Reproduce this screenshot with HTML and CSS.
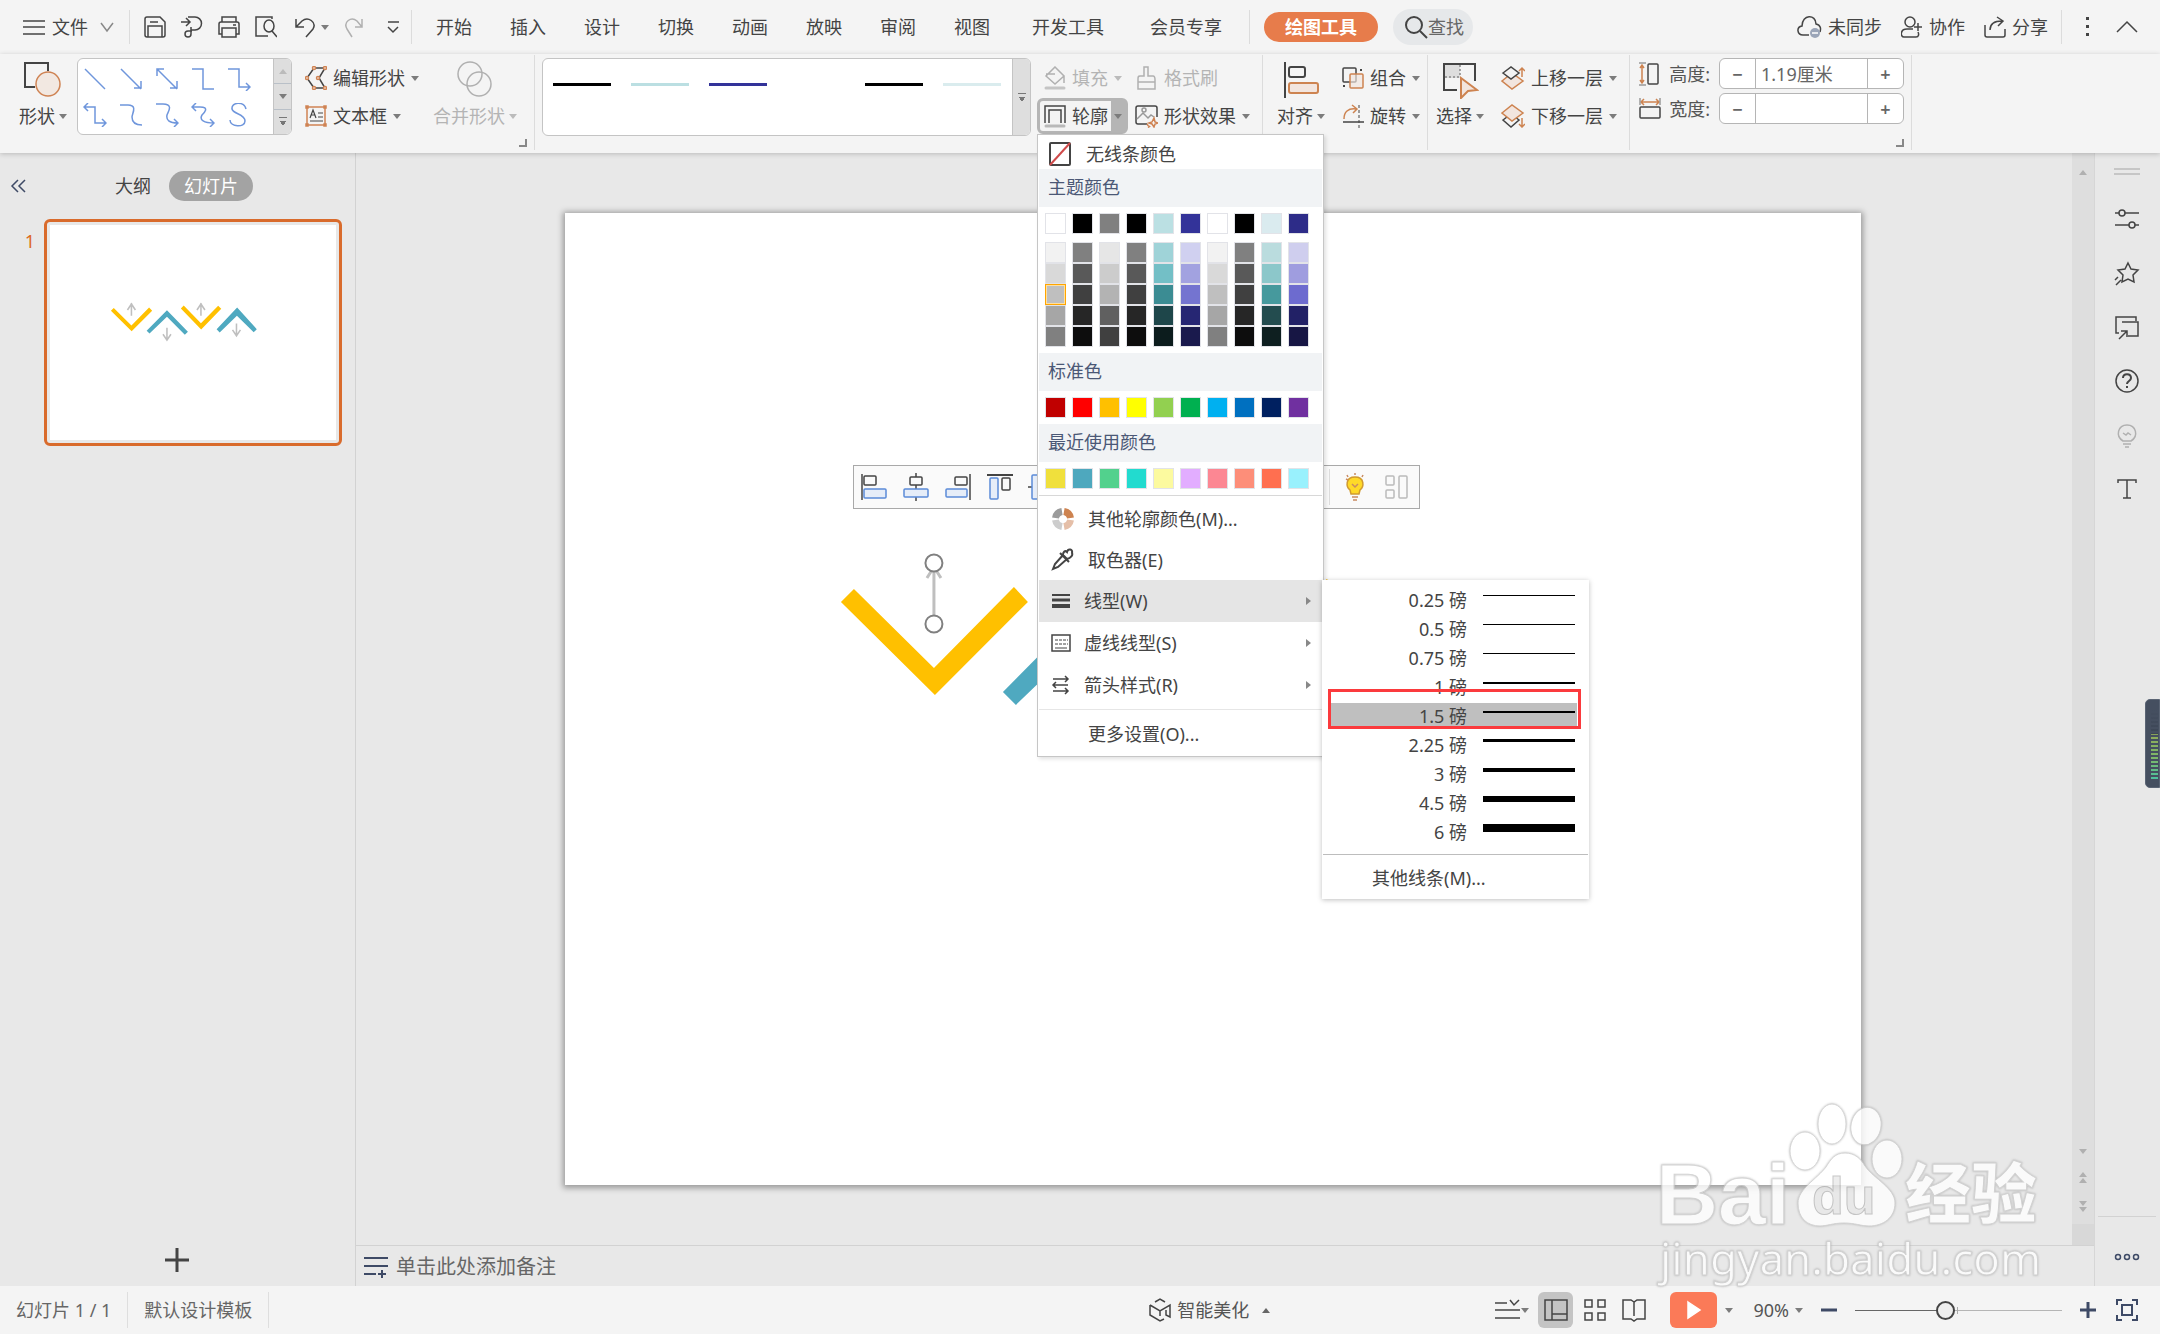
FILE: index.html
```html
<!DOCTYPE html>
<html lang="zh-CN">
<head>
  <meta charset="UTF-8" />
  <title>演示文稿</title>
  <meta name="viewport" content="width=device-width, initial-scale=1.0" />
  <link rel="stylesheet" href="styles.css">
</head>
<body>

  <!-- Slide drawing, shared by the thumbnail and the canvas -->
  <svg class="defs" width="0" height="0">
    <symbol id="slide-art" viewBox="0 0 1296 972">
      <path fill="#ffc000" d="M276 389l13-13 80 79 80-81 14 15-93 93zM593 378l13-13 78 80 78-79 14 14-91 94z"/>
      <path fill="#4fa9c0" d="M438 479l92-93 95 98-14 13-81-81-79 76zM755 472l93-98 89 98-14 14-76-75-78 76z"/>
    </symbol>
  </svg>

  <div class="app">

    <header class="titlebar">
      <button class="file-btn">
        <svg width="22" height="22" viewBox="0 0 22 22"><path d="M0 5h22M0 11h22M0 18h22"/></svg>
        <span>文件</span>
        <svg class="soft" width="14" height="14" viewBox="0 0 14 14"><path d="M1 3l6 8 6-8"/></svg>
      </button>
      <span class="divider"></span>
      <div class="quick">
        <button aria-label="保存"><svg width="22" height="22" viewBox="0 0 22 22"><path d="M3 1h13l5 5v13a2 2 0 0 1-2 2H3a2 2 0 0 1-2-2V3a2 2 0 0 1 2-2zM4 21V10h14v11M6 6h8"/></svg></button>
        <button aria-label="输出为PDF"><svg width="22" height="22" viewBox="0 0 22 22"><path d="M0 6h8M5 2l4 4-4 4M7 1h7a6 6 0 0 1 0 13h-4v-3M10 14v4a3 3 0 1 1-3-3h4"/></svg></button>
        <button aria-label="打印"><svg width="22" height="22" viewBox="0 0 22 22"><path d="M4 6V1h14v5M4 18H1V8a2 2 0 0 1 2-2h16a2 2 0 0 1 2 2v10h-3M4 12h14v9H4zM15 9h3"/></svg></button>
        <button aria-label="打印预览"><svg width="22" height="22" viewBox="0 0 22 22"><path d="M17 3V1H1v19h12M17 15l5 6"/><ellipse cx="14" cy="10" rx="5" ry="6"/></svg></button>
        <button class="undo" aria-label="撤销"><svg width="20" height="22" viewBox="0 0 20 22"><path d="M1 3v8h8M1 11l6-6c6-5 15 1 11 8l-7 8"/></svg><i class="caret"></i></button>
        <button class="off" aria-label="恢复"><svg width="20" height="22" viewBox="0 0 20 22"><path d="M18 3v8h-7M18 11l-5-6C7 0-1 6 3 13l5 8"/></svg></button>
        <button class="more" aria-label="自定义"><svg width="12" height="14" viewBox="0 0 12 14"><path d="M1 2h11M1 7l5 5 5-5"/></svg></button>
      </div>
      <span class="divider"></span>
      <nav class="tabs">
        <button>开始</button><button>插入</button><button>设计</button><button>切换</button><button>动画</button><button>放映</button><button>审阅</button><button>视图</button><button class="wide">开发工具</button><button class="wide">会员专享</button>
      </nav>
      <span class="divider"></span>
      <button class="tool-tab">绘图工具</button>
      <button class="find">
        <svg width="24" height="24" viewBox="0 0 24 24" stroke-width="2"><circle cx="10" cy="10" r="8"/><path d="M16 16l7 7"/></svg>查找
      </button>
      <div class="account">
        <button><svg width="25" height="24" viewBox="0 0 25 24"><path d="M12 20H6C0 20-1 12 5 11 5-1 19-1 19 9c5 1 5 5 4 8"/><circle cx="18" cy="18" r="5" fill="#9ba5b8" stroke="none"/><path stroke="#fff" d="M15 18h6"/></svg>未同步</button>
        <button><svg width="22" height="22" viewBox="0 0 22 22"><circle cx="9" cy="6" r="5"/><path d="M12 13H6c-7 0-7 8-3 8h12c3 0 3-3 2-5M17 7v8M13 11h8"/></svg>协作</button>
        <button><svg width="22" height="22" viewBox="0 0 22 22"><path d="M1 9v10a2 2 0 0 0 2 2h16a2 2 0 0 0 2-2v-6M6 14c0-6 4-9 12-9M13 1l6 4-5 5"/></svg>分享</button>
        <span class="divider"></span>
        <button class="dots" aria-label="更多"><svg width="4" height="22" viewBox="0 0 4 22"><path fill="#444" stroke="none" d="M0 1h3v3H0zM0 9h3v3H0zM0 17h3v3H0z"/></svg></button>
        <button aria-label="收起功能区"><svg width="22" height="14" viewBox="0 0 22 14"><path d="M1 12L11 2l10 10"/></svg></button>
      </div>
    </header>

    <section class="ribbon">
      <div class="group shapes-group">
        <button class="big">
          <svg width="38" height="38" viewBox="0 0 38 38"><path stroke-width="2" d="M11 26H1V2h23v8"/><circle cx="24" cy="23" r="12" fill="#f2e8e1" stroke="#cf8353"/></svg>
          <span>形状<i class="caret"></i></span>
        </button>
        <div class="gallery">
          <div class="shape-list">
            <button aria-label="直线"><svg viewBox="0 0 24 24"><path d="M2 2l20 20"/></svg></button>
            <button aria-label="箭头"><svg viewBox="0 0 24 24"><path d="M2 2l20 20M15 21h7v-7"/></svg></button>
            <button aria-label="双箭头"><svg viewBox="0 0 24 24"><path d="M2 2l20 20M15 21h7v-7M9 2H2v7"/></svg></button>
            <button aria-label="肘形"><svg viewBox="0 0 24 24"><path d="M1 2h11v20h11"/></svg></button>
            <button aria-label="肘形箭头"><svg viewBox="0 0 24 24"><path d="M1 2h11v18h11M19 16l4 4-4 4"/></svg></button>
            <button aria-label="肘形双箭头"><svg viewBox="0 0 24 24"><path d="M1 4h11v16h11M19 16l4 4-4 4M5 0L1 4l4 4"/></svg></button>
            <button aria-label="曲线"><svg viewBox="0 0 24 24"><path d="M1 2h8c10 0 4 9 4 12 0 5 3 8 10 8"/></svg></button>
            <button aria-label="曲线箭头"><svg viewBox="0 0 24 24"><path d="M1 1h7c11 0 5 8 4 11-1 5 2 8 11 8M19 16l4 4-4 4"/></svg></button>
            <button aria-label="曲线双箭头"><svg viewBox="0 0 24 24"><path d="M1 4h8c10 0 4 6 2 8-3 5 2 8 12 8M19 16l4 4-4 4M5 0L1 4l4 4"/></svg></button>
            <button aria-label="自由曲线"><svg viewBox="0 0 24 24"><path d="M19 6C17-2 4-1 5 6c1 5 13 5 13 12 0 7-15 6-15-1"/></svg></button>
          </div>
          <div class="gallery-scroll">
            <button aria-label="上一行"><i class="caret up pale"></i></button>
            <button aria-label="下一行"><i class="caret"></i></button>
            <button aria-label="展开"><i class="bar-caret"></i></button>
          </div>
        </div>
        <div class="stack">
          <button><svg width="22" height="24" viewBox="0 0 22 24"><path d="M20 2H9L2 12l7 10h11l-6-10z"/><g fill="#fff" stroke="#cf8353"><circle cx="20" cy="2" r="1.5"/><circle cx="9" cy="2" r="1.5"/><circle cx="2" cy="12" r="1.5"/><circle cx="9" cy="22" r="1.5"/><circle cx="20" cy="22" r="1.5"/><circle cx="13" cy="12" r="1.5"/></g></svg>编辑形状<i class="caret"></i></button>
          <button><svg width="22" height="22" viewBox="0 0 22 22"><path stroke="#cf8353" d="M2 2h18v18H2zM1 1h2v2H1zM19 1h2v2h-2zM1 19h2v2H1zM19 19h2v2h-2z"/><path d="M5 13l3-8 3 8M6 10h4M13 8h5M13 12h5M5 16h13" stroke-width="1.2"/></svg>文本框<i class="caret"></i></button>
        </div>
        <button class="big off merge">
          <svg width="36" height="38" viewBox="0 0 36 38"><circle cx="13" cy="13" r="12"/><circle cx="22" cy="23" r="12"/></svg>
          <span>合并形状<i class="caret"></i></span>
        </button>
        <i class="launcher"></i>
      </div>
      <span class="divider"></span>

      <div class="group style-group">
        <div class="gallery style-gallery">
          <div class="style-list" id="style-list"></div>
          <div class="gallery-scroll"><button aria-label="展开样式"><i class="bar-caret"></i></button></div>
        </div>
        <div class="paint">
          <button class="cell off"><svg width="22" height="24" viewBox="0 0 22 24"><path d="M11 1l9 9-9 8-9-8zM2 8h9M20 10v7"/><path stroke="#c4c4c4" stroke-width="3" stroke-linecap="round" d="M2 22h18"/></svg>填充<i class="caret"></i></button>
          <button class="off"><svg width="23" height="24" viewBox="0 0 23 24"><path d="M9 1h4v9h5c2 0 2 2 2 4v9H3V14c0-3 0-4 2-4h4zM3 16h17"/></svg>格式刷</button>
          <div class="outline">
            <button class="cell open"><svg width="22" height="24" viewBox="0 0 22 24"><path d="M1 19V2h20v17M5 19V6h12v13"/><path stroke="#b9b9b9" stroke-width="3" stroke-linecap="round" d="M2 22h18"/></svg>轮廓<i class="caret"></i></button>

            <!-- Outline drop-down -->
            <div class="menu">
              <button class="no-line"><svg width="22" height="24" viewBox="0 0 22 24"><rect x="1" y="1" width="20" height="22" rx="1" stroke-width="2"/><path stroke="#d04a4a" stroke-width="2" d="M1 23L21 1"/></svg>无线条颜色</button>
              <h3>主题颜色</h3>
              <div class="swatches" id="theme"></div>
              <div class="swatches tints" id="tints"></div>
              <h3>标准色</h3>
              <div class="swatches" id="standard"></div>
              <h3>最近使用颜色</h3>
              <div class="swatches" id="recent"></div>
              <hr>
              <button class="item plain"><svg width="24" height="24" viewBox="0 0 24 24" stroke-width="7"><path stroke="#9b9b9b" d="M4.500 11A8 8 0 0 1 11 4.500"/><path stroke="#cd8350" d="M13 4.500A8 8 0 0 1 19.500 11"/><path stroke="#e5bfa8" d="M19.500 13A8 8 0 0 1 13 19.500"/><path stroke="#cdcdcd" d="M11 19.500A8 8 0 0 1 4.500 13"/></svg>其他轮廓颜色(M)...</button>
              <button class="item plain"><svg width="24" height="24" viewBox="0 0 24 24"><path stroke-width="2" d="M2 21l2-5 8-9 4 4-9 8zM9 5l9 9M12 7c0-3 2-5 4-3 1-4 6-3 5 1 1 2-1 5-5 6"/></svg>取色器(E)</button>
              <div class="sub-wrap">
                <button class="item hover"><svg width="20" height="20" viewBox="0 0 20 20"><path d="M1 4h18" stroke-width="2"/><path d="M1 9h18" stroke-width="3"/><path d="M1 15h18" stroke-width="4"/></svg>线型(W)<i class="caret right"></i></button>
                <div class="submenu">
                  <ul id="weights"></ul>
                  <hr>
                  <button class="more-lines">其他线条(M)...</button>
                </div>
              </div>
              <button class="item"><svg width="20" height="20" viewBox="0 0 20 20"><path d="M1 2h18v16H1z"/><path stroke-width="1" d="M4 15h12"/><path stroke-width="1" stroke-dasharray="3 1" d="M4 7h13M4 11h13"/></svg>虚线线型(S)<i class="caret right"></i></button>
              <button class="item"><svg width="20" height="20" viewBox="0 0 20 20"><path d="M2 4h15M14 1l3 3-3 3M17 10H2M5 7l-3 3 3 3M2 16h15M14 13l3 3-3 3"/></svg>箭头样式(R)<i class="caret right"></i></button>
              <hr class="light">
              <button class="item last">更多设置(O)...</button>
            </div>
          </div>
          <button><svg width="23" height="24" viewBox="0 0 23 24"><path d="M12 20H3a2 2 0 0 1-2-2V4a2 2 0 0 1 2-2h17a2 2 0 0 1 2 2v9"/><path stroke="#999" d="M2 15l6-6 5 5 3-3 3 2"/><circle cx="9" cy="6" r="2" stroke="#999"/><path stroke="#cf8353" d="M19 14l1 4 3 1-3 1-1 3-2-3-3-1 3-1zM12 20l1 1.500 1.500 1-1.500 1"/></svg>形状效果<i class="caret"></i></button>
        </div>
      </div>
      <span class="divider"></span>

      <div class="group align-group">
        <button class="big">
          <svg width="38" height="38" viewBox="0 0 38 38" stroke-width="2"><path d="M3 1v36"/><rect x="7" y="6" width="16" height="10" rx="2"/><rect x="7" y="22" width="29" height="10" rx="2" fill="#f2e5de" stroke="#cd8350"/></svg>
          <span>对齐<i class="caret"></i></span>
        </button>
        <div class="stack">
          <button><svg width="22" height="24" viewBox="0 0 22 24"><rect x="1" y="2" width="13" height="14" rx="1"/><rect x="8" y="8" width="13" height="14" rx="1" fill="#f2e5deaa" stroke="#cd8350"/><path d="M2 19v2M19 3v2" stroke-width="2"/></svg>组合<i class="caret"></i></button>
          <button><svg width="22" height="24" viewBox="0 0 22 24"><path stroke="#cd8350" d="M2 15C2 8 6 4 14 5M10 1l5 4-4 4"/><path stroke-dasharray="3 2" stroke-width="1" d="M17 1v23"/><path d="M1 18h21"/></svg>旋转<i class="caret"></i></button>
        </div>
      </div>
      <span class="divider"></span>

      <div class="group select-group">
        <button class="big">
          <svg width="38" height="38" viewBox="0 0 38 38"><path fill="#ddd" stroke="none" d="M4 4h15v13H4z"/><path stroke-width="2" d="M34 20V3H3v26h13"/><path stroke="#888" stroke-dasharray="2 2" d="M19 4v12M4 16h15"/><path fill="#f2e5de" stroke="#cd8350" stroke-width="2" d="M20 17l16 12-9 1-7 7z"/></svg>
          <span>选择<i class="caret"></i></span>
        </button>
        <div class="stack">
          <button><svg width="24" height="24" viewBox="0 0 24 24"><path fill="#f2e5de" stroke="#cd8350" d="M1 15l10-8 11 8-11 8z"/><path fill="#f3f3f3" d="M2 7l8-6 8 6-8 6z"/><path stroke="#cd8350" d="M21 11V2M18 5l3-3 3 3"/></svg>上移一层<i class="caret"></i></button>
          <button><svg width="24" height="24" viewBox="0 0 24 24"><path d="M2 16l8-6 8 6-8 7z"/><path fill="#f2e5de" stroke="#cd8350" d="M1 9l10-8 11 8-11 8z"/><path stroke="#cd8350" d="M21 14v9M18 20l3 3 3-3"/></svg>下移一层<i class="caret"></i></button>
        </div>
      </div>
      <span class="divider"></span>

      <div class="group size-group">
        <div class="size-row">
          <svg width="20" height="24" viewBox="0 0 20 24"><rect x="9" y="2" width="10" height="20" rx="1"/><path stroke="#cd8350" d="M3 3v18M1 6l2-3 2 3M1 18l2 3 2-3"/><path stroke="#999" d="M0 1h7M0 23h7"/></svg>
          <label for="height">高度:</label>
          <div class="spinner"><button aria-label="减小高度">−</button><input id="height" type="text" value="1.19厘米"><button aria-label="增大高度">+</button></div>
        </div>
        <div class="size-row">
          <svg width="22" height="24" viewBox="0 0 22 24"><rect x="1" y="10" width="20" height="11" rx="1"/><path stroke="#cd8350" d="M2 5h18M5 2L2 5l3 3M17 2l3 3-3 3"/><path stroke="#999" d="M1 1v7M21 1v7"/></svg>
          <label for="width">宽度:</label>
          <div class="spinner"><button aria-label="减小宽度">−</button><input id="width" type="text" value=""><button aria-label="增大宽度">+</button></div>
        </div>
        <i class="launcher"></i>
      </div>
      <span class="divider"></span>
    </section>

    <main class="workspace">
      <aside class="outline-pane">
        <div class="pane-head">
          <button class="collapse" aria-label="收起"><svg width="16" height="16" viewBox="0 0 16 16" stroke="#3e4a66"><path d="M8 2L2 8l6 6M15 2L9 8l6 6"/></svg></button>
          <button class="pane-tab">大纲</button>
          <button class="pane-tab active">幻灯片</button>
        </div>
        <div class="thumb-row">
          <span class="thumb-num">1</span>
          <button class="thumb" aria-label="幻灯片 1">
            <svg viewBox="0 0 1296 972" stroke="none">
              <use href="#slide-art"/>
              <path stroke="#bfbfbf" stroke-width="7" d="M369 411V354M351 385l18-27 18 27M684 411V354M666 385l18-27 18 27M530 466v57M512 495l18 27 18-27M845 446v57M827 475l18 27 18-27"/>
            </svg>
          </button>
        </div>
        <button class="add-slide" aria-label="新建幻灯片"><svg width="26" height="26" viewBox="0 0 26 26" stroke-width="3"><path d="M13 1v24M1 13h24"/></svg></button>
      </aside>

      <section class="editor">
        <div class="stage-row">
          <div class="stage">
            <div class="slide">
              <svg class="slide-svg" viewBox="0 0 1296 972" stroke="none">
                <use href="#slide-art"/>
                <path stroke="#bfbfbf" stroke-width="3" d="M369 411V352M362 365l7-11 7 11M684 411V352M530 466v57M845 446v57"/>
                <g fill="#fff" stroke="#808080" stroke-width="2"><circle cx="369" cy="350" r="8.500"/><circle cx="369" cy="411" r="8.500"/></g>
              </svg>
              <div class="float-bar">
                <button aria-label="左对齐"><svg viewBox="0 0 28 28"><path d="M2 1v26"/><rect x="4" y="3" width="12" height="9" rx="1"/><rect class="blue" x="4" y="16" width="22" height="9" rx="1"/></svg></button>
                <button aria-label="水平居中"><svg viewBox="0 0 28 28"><path d="M14 0v28"/><rect x="8" y="4" width="12" height="8" rx="1" fill="#fafafa"/><rect class="blue" x="2" y="16" width="24" height="8" rx="1"/></svg></button>
                <button aria-label="右对齐"><svg viewBox="0 0 28 28"><path d="M26 1v26"/><rect x="11" y="4" width="12" height="8" rx="1"/><rect class="blue" x="2" y="16" width="21" height="8" rx="1"/></svg></button>
                <button aria-label="靠上对齐"><svg viewBox="0 0 28 28"><path d="M1 2h26" stroke-width="2"/><rect class="blue" x="4" y="5" width="8" height="21" rx="1"/><rect x="16" y="5" width="8" height="12" rx="1"/></svg></button>
                <button aria-label="垂直居中"><svg viewBox="0 0 28 28"><path d="M0 14h28"/><rect class="blue" x="4" y="2" width="8" height="24" rx="1"/></svg></button>
                <span class="push"></span>
                <button aria-label="智能"><svg viewBox="0 0 28 28"><path fill="#ffd928" stroke="#d09a30" d="M14 4c-10 0-9 10-5 13l1 4h8l1-4c4-3 5-13-5-13z"/><path stroke="#c98b62" d="M11 24h6M12 27h4M14 0v2M6 2l1 2M22 2l-1 2M5 6l2 1M11 11l3 3 3-3"/></svg></button>
                <button aria-label="布局"><svg viewBox="0 0 28 28" stroke="#bbb"><rect x="3" y="3" width="8" height="9" rx="1"/><rect x="3" y="17" width="8" height="8" rx="1"/><rect x="16" y="3" width="8" height="22" rx="1"/></svg></button>
              </div>
            </div>
          </div>
          <div class="scrollbar">
            <i class="caret up"></i>
            <div class="pager"><i class="caret"></i><span><i class="caret up"></i><i class="caret up"></i></span><span><i class="caret"></i><i class="caret"></i></span></div>
            <div class="scroll-foot"></div>
          </div>
        </div>
        <div class="notes">
          <svg width="24" height="22" viewBox="0 0 24 22" stroke="#3e4a66" stroke-width="2"><path d="M0 2h24M0 10h24M0 18h12M14 18h8M18 14v8"/></svg>
          单击此处添加备注
        </div>
      </section>

      <aside class="side-tools">
        <svg class="grip" width="26" height="8" viewBox="0 0 26 8"><path stroke="#bbb" d="M0 1h26M0 6h26"/></svg>
        <button aria-label="属性"><svg viewBox="0 0 26 26"><path d="M1 7h4M11 7h14M1 19h14M21 19h4"/><circle cx="8" cy="7" r="3"/><circle cx="18" cy="19" r="3"/></svg></button>
        <button aria-label="动画"><svg viewBox="0 0 26 26"><path d="M14 3l3 6 7 1-5 5 1 7-6-3-6 3 1-7-5-5 7-1zM2 25l5-5M1 20l3-3"/></svg></button>
        <button aria-label="素材"><svg viewBox="0 0 26 26"><path d="M5 19H2V3h20v4M8 8h16v14H14M5 25l8-8M13 23v-6H7"/></svg></button>
        <button aria-label="帮助"><svg viewBox="0 0 26 26"><circle cx="13" cy="13" r="11"/><path d="M9 10c0-5 8-5 8 0 0 3-4 3-4 6M13 18v2" stroke-width="2"/></svg></button>
        <button aria-label="提示" class="off"><svg viewBox="0 0 26 26"><path d="M9 19c-8-5-5-16 4-16s12 11 4 16zM9 22h8M11 25h4M9 11l3 2 2-2 3 2"/></svg></button>
        <button aria-label="文字"><svg viewBox="0 0 26 26"><path d="M4 7V4h18v3M13 4v18M9 22h8"/></svg></button>
        <div class="side-more"><button aria-label="更多工具"><svg viewBox="0 0 26 26" stroke="#3e4a66"><circle cx="4" cy="13" r="2.500"/><circle cx="13" cy="13" r="2.500"/><circle cx="22" cy="13" r="2.500"/></svg></button></div>
        <div class="meter"></div>
      </aside>
    </main>

    <footer class="status">
      <span class="status-cell">幻灯片 1 / 1</span>
      <span class="status-cell">默认设计模板</span>
      <button class="beautify"><svg width="22" height="24" viewBox="0 0 22 24"><path d="M6 4l5-3 5 3M1 7v10l10 6 4-2M1 7l10 6 10-6v12l-4-2v-5M11 13v5"/></svg>智能美化<i class="caret up"></i></button>
      <div class="views">
        <button class="note-view" aria-label="备注"><svg width="26" height="24" viewBox="0 0 26 24"><path d="M0 5h12M15 2l4 5 5-5M0 12h25M0 20h25"/></svg><i class="caret"></i></button>
        <button class="view active" aria-label="普通视图"><svg width="24" height="24" viewBox="0 0 24 24"><path d="M1 2h22v20H1zM8 2v20M8 16h15"/></svg></button>
        <button class="view" aria-label="浏览视图"><svg width="24" height="24" viewBox="0 0 24 24"><path d="M2 2h7v7H2zM15 2h7v7h-7zM2 15h7v7H2zM15 15h7v7h-7z"/></svg></button>
        <button class="view" aria-label="阅读视图"><svg width="24" height="24" viewBox="0 0 24 24"><path d="M12 4L9 2H1v19h8l3 2 3-2h8V2h-8zM12 4v14"/></svg></button>
        <button class="play" aria-label="放映"><svg width="16" height="20" viewBox="0 0 16 20"><path fill="#fff" stroke="#fff" d="M2 2l12 8-12 8z"/></svg></button>
        <i class="caret"></i>
        <button class="zoom-val">90%<i class="caret"></i></button>
        <button class="zoom-step" aria-label="缩小"><svg width="16" height="16" viewBox="0 0 16 16" stroke="#3e4a66" stroke-width="3"><path d="M0 8h16"/></svg></button>
        <input class="zoom" type="range" min="0" max="100" value="43" aria-label="缩放">
        <button class="zoom-step" aria-label="放大"><svg width="16" height="16" viewBox="0 0 16 16" stroke="#3e4a66" stroke-width="3"><path d="M0 8h16M8 0v16"/></svg></button>
        <button class="fit" aria-label="适应窗口"><svg width="22" height="22" viewBox="0 0 22 22" stroke="#3e4a66" stroke-width="2"><path d="M1 6V1h5M16 1h5v5M21 16v5h-5M6 21H1v-5M6 6h10v10H6z"/></svg></button>
      </div>
    </footer>

    <svg class="watermark" width="420" height="206" viewBox="1640 1094 420 206" stroke="none">
      <text class="wm-bai" x="1656" y="1224">Bai</text>
      <g class="wm-paw">
        <ellipse cx="1805" cy="1151" rx="15" ry="19"/>
        <ellipse cx="1832" cy="1124" rx="14" ry="20"/>
        <ellipse cx="1866" cy="1126" rx="15" ry="19" transform="rotate(12 1866 1126)"/>
        <ellipse cx="1887" cy="1159" rx="15" ry="19"/>
        <path d="M1845 1153c10 0 16 6 20 13 9 13 30 22 30 37 0 15-12 23-26 23-8 0-14-3-25-3s-17 3-24 3c-13 0-22-8-22-23 0-14 19-24 28-36 5-8 9-14 19-14z"/>
      </g>
      <text class="wm-du" x="1812" y="1214">du</text>
      <text class="wm-cn" x="1905" y="1218">经验</text>
      <text class="wm-url" x="1660" y="1275">jingyan.baidu.com</text>
    </svg>
  </div>

  <script src="script.js"></script>
</body>
</html>
```

FILE: styles.css
```css
*, *::after {
  box-sizing: border-box;
}

html, body {
  margin: 0;
  height: 100%;
  overflow: hidden;
}

body, button, input {
  font-family: "Noto Sans", "Noto Sans CJK SC", sans-serif;
  font-size: 18px;
  font-weight: 400;
  line-height: 26px;
  color: #444;
}

button {
  display: flex;
  align-items: center;
  padding: 0;
  border: 0;
  background: none;
  white-space: nowrap;
  cursor: pointer;
}

svg {
  display: block;
  flex: none;
  fill: none;
}

svg:not([stroke]) {
  stroke: #444;
}

svg:not([stroke-width]) {
  stroke-width: 1.5;
}

.defs {
  position: absolute;
}

.app {
  position: relative;
  display: flex;
  flex-direction: column;
  height: 100%;
  background: #e8e8e8;
}

.divider {
  flex: none;
  width: 1px;
  background: #dcdcdc;
}

/* small triangles */
.caret {
  flex: none;
  width: 8px;
  border: 4px solid transparent;
  border-top: 5px solid #7c7c7c;
  border-bottom: 0;
}

.caret.up {
  border-top: 0;
  border-bottom: 5px solid #666;
}

.caret.pale {
  border-bottom-color: #bbb;
}

.caret.right {
  width: 5px;
  margin-left: auto;
  border: 4px solid transparent;
  border-left: 5px solid #888;
  border-right: 0;
}

.bar-caret {
  width: 8px;
  height: 9px;
  border-top: 1px solid #777;
  background: conic-gradient(from 326deg at 50% 100%, #777 68deg, transparent 0) bottom / 8px 5px no-repeat;
  transform: rotate(0deg);
}

.off, .off span {
  color: #b4b4b4;
}

.off svg {
  stroke: #b0b0b0;
}

.off .caret {
  border-top-color: #bbb;
}

/* title bar */
.titlebar {
  display: flex;
  align-items: center;
  height: 54px;
  padding-left: 23px;
  background: #f4f4f4;
}

.titlebar .divider {
  height: 34px;
}

.file-btn {
  gap: 7px;
  margin-right: 15px;
}

.file-btn .soft {
  margin-left: 5px;
  stroke: #888;
}

.quick {
  display: flex;
  align-items: center;
  gap: 15px;
  padding: 0 12px 0 14px;
}

.undo {
  gap: 6px;
  margin-left: 3px;
}

.more {
  margin-left: 8px;
}

.tabs {
  display: flex;
  padding: 0 4px 0 5px;
}

.tabs button {
  padding: 0 19px;
}

.tabs .wide {
  padding: 0 23px;
}

.tool-tab {
  height: 30px;
  margin: 0 15px 0 14px;
  padding: 0 21px;
  border-radius: 15px;
  background: #e77c4b;
  color: #fff;
  font-weight: 700;
}

.find {
  height: 36px;
  padding: 0 9px 0 11px;
  border-radius: 18px;
  background: #e6e8ea;
  color: #666;
}

.account {
  display: flex;
  align-items: center;
  gap: 19px;
  margin-left: auto;
  padding-right: 22px;
}

.account button {
  gap: 6px;
}

.account .divider {
  margin-left: -6px;
}

.account .dots {
  margin: 0 7px 0 5px;
}

/* ribbon */
.ribbon {
  position: relative;
  z-index: 5;
  display: flex;
  height: 99px;
  padding-left: 19px;
  background: #f4f4f4;
  box-shadow: 0 1px 5px rgba(0, 0, 0, 0.2);
}

.ribbon > .divider {
  height: 95px;
  margin-top: 1px;
}

.group {
  position: relative;
  display: flex;
  padding-top: 4px;
}

.big {
  flex-direction: column;
  align-self: flex-start;
  padding-top: 3px;
  gap: 4px;
}

.big span {
  display: flex;
  align-items: center;
  gap: 4px;
}

.stack {
  display: flex;
  flex-direction: column;
  gap: 2px;
  padding-top: 2px;
}

.stack button, .paint button {
  gap: 6px;
  height: 36px;
}

.gallery {
  display: flex;
  height: 77px;
  border: 1px solid #c4c4c4;
  border-radius: 6px;
  background: #fff;
  overflow: hidden;
}

.gallery-scroll {
  display: flex;
  flex-direction: column;
  width: 18px;
  border-left: 1px solid #c4c4c4;
  background: #dedede;
}

.gallery-scroll button {
  flex: 1;
  justify-content: center;
}

.gallery-scroll button + button {
  border-top: 1px solid #b9c0c8;
}

.launcher {
  position: absolute;
  right: 7px;
  bottom: 6px;
  width: 8px;
  height: 8px;
  border: solid #888;
  border-width: 0 2px 2px 0;
}

.shapes-group {
  padding-right: 17px;
}

.shapes-group .gallery {
  width: 215px;
  margin: 0 13px 0 10px;
}

.shape-list {
  flex: 1;
  display: grid;
  grid-template-columns: repeat(5, 36px);
  align-content: center;
  gap: 12px 0;
  padding-left: 5px;
}

.shape-list svg {
  width: 24px;
  height: 24px;
  stroke: #6f96dc;
}

.merge {
  margin-left: 14px;
}

.style-group {
  padding: 4px 12px 0 7px;
}

.style-gallery {
  width: 489px;
  height: 78px;
  margin-right: 6px;
}

.style-list {
  flex: 1;
  display: flex;
  gap: 20px;
  padding: 24px 10px;
}

.paint .swatches button, .style-list button {
  flex: none;
}

.style-list button {
  width: 58px;
  height: 3px;
}

.paint {
  display: grid;
  grid-template-columns: 91px auto;
  gap: 2px 7px;
  align-content: start;
  padding-top: 2px;
}

.cell {
  width: 91px;
  padding: 0 6px 0 7px;
}

.outline {
  position: relative;
}

.cell.open {
  padding: 0 3px 0 4px;
  border: 3px solid #b5b5b5;
  border-radius: 6px;
  background: linear-gradient(to right, #f4f4f4 71px, #b5b5b5 71px);
}

.align-group {
  padding: 4px 7px 0 14px;
}

.align-group .stack, .select-group .stack {
  margin-left: 17px;
}

.select-group {
  padding: 4px 12px 0 8px;
}

.size-group {
  flex-direction: column;
  gap: 4px;
  padding: 4px 7px 0 9px;
}

.size-row {
  display: flex;
  align-items: center;
  justify-content: space-between;
  width: 265px;
}

.size-row label {
  margin-left: auto;
  margin-right: 9px;
  color: #555;
}

.spinner {
  display: flex;
  width: 185px;
  height: 31px;
  border: 1px solid #b5b5b5;
  border-radius: 6px;
  background: #fff;
}

.spinner button {
  width: 35px;
  justify-content: center;
  font-weight: 600;
  color: #666;
}

.spinner input {
  flex: 1;
  min-width: 0;
  padding: 0 5px;
  border: solid #b5b5b5;
  border-width: 0 1px;
  background: none;
  color: #666;
}

/* outline drop-down */
.menu {
  position: absolute;
  top: 36px;
  left: 0;
  width: 287px;
  padding: 1px;
  border: 1px solid #c6c6c6;
  background: #fff;
  box-shadow: 2px 2px 4px rgba(0, 0, 0, 0.12);
}

.menu .no-line {
  width: 100%;
  height: 33px;
  gap: 15px;
  padding: 2px 0 0 10px;
}

.menu h3 {
  margin: 0;
  padding: 5px 9px 7px;
  background: #f1f3f5;
  color: #4b5876;
  font-size: 18px;
  font-weight: 400;
}

.swatches {
  display: grid;
  grid-template-columns: repeat(10, 21px);
  column-gap: 6px;
  padding: 6px;
}

.swatches.tints {
  padding-top: 2px;
}

.paint .swatches button {
  width: 21px;
  height: 21px;
  border: 1px solid #e2e3e8;
}

.paint .swatches .picked {
  border-color: #ffa500;
  box-shadow: inset 0 0 0 1px #ffe0a0;
}

.menu hr {
  height: 1px;
  margin: 0 0 2px;
  border: 0;
  background: #d8d8d8;
}

.menu hr.light {
  margin-top: 3px;
  background: #e6e6e6;
}

.paint .item {
  width: 100%;
  height: 42px;
  gap: 13px;
  padding: 0 11px 0 12px;
}

.paint .item.plain {
  height: 41px;
}

.paint .item.last {
  height: 43px;
  padding-left: 49px;
}

.item.hover {
  background: #e5e5e5;
}

.sub-wrap {
  position: relative;
}

.submenu {
  position: absolute;
  top: 0;
  left: 100%;
  width: 267px;
  padding: 6px 1px 0;
  background: #fff;
  box-shadow: 0 1px 5px rgba(0, 0, 0, 0.25);
}

.submenu ul {
  margin: 0;
  padding: 0 11px 7px 8px;
  list-style: none;
}

.submenu li {
  position: relative;
  padding: 1px 0 5px;
}

.paint .submenu li button {
  justify-content: flex-end;
  align-items: flex-start;
  gap: 16px;
  width: 100%;
  height: 23px;
  padding-right: 2px;
}

.submenu li.current button {
  background: #bfbfbf;
}

/* red frame round the current weight */
.submenu li.current::after {
  content: "";
  position: absolute;
  top: -13px;
  left: -3px;
  right: -4px;
  height: 40px;
  border: 3px solid #fb3a3d;
}

.weight {
  display: flex;
  align-items: center;
  width: 92px;
  height: 17px;
}

.weight i {
  width: 100%;
  background: #000;
}

.submenu hr {
  background: #bdbdbd;
}

.paint .more-lines {
  width: 100%;
  height: 42px;
  padding-left: 49px;
}

/* workspace */
.workspace {
  flex: 1;
  display: flex;
  min-height: 0;
}

.outline-pane {
  display: flex;
  flex-direction: column;
  width: 356px;
  padding: 18px 13px 13px 10px;
  border-right: 1px solid #d2d2d2;
}

.pane-head {
  display: flex;
  align-items: center;
  height: 30px;
}

.collapse {
  margin-right: 89px;
}

.pane-tab.active {
  height: 30px;
  margin-left: 18px;
  padding: 0 15px;
  border-radius: 15px;
  background: #a3a3a3;
  color: #fff;
}

.thumb-row {
  display: flex;
  margin-top: 18px;
}

.thumb-num {
  width: 34px;
  padding: 9px 9px 0 0;
  text-align: right;
  color: #dd6a1f;
}

.thumb {
  flex: 1;
  padding: 3px;
  border: 3px solid #d96b2c;
  border-radius: 6px;
}

.thumb svg {
  width: 100%;
  background: #fff;
}

.add-slide {
  align-self: flex-start;
  margin: auto 0 0 154px;
}

.editor {
  flex: 1;
  display: flex;
  flex-direction: column;
  min-width: 0;
}

.stage-row {
  flex: 1;
  display: flex;
  min-height: 0;
}

.stage {
  flex: 1;
  display: flex;
  align-items: center;
  justify-content: center;
  padding-right: 2px;
}

.slide {
  position: relative;
  width: 75.6%;
  aspect-ratio: 4 / 3;
  background: #fff;
  box-shadow: 0 1px 6px 2px rgba(0, 0, 0, 0.35);
}

.slide-svg {
  width: 100%;
}

.float-bar {
  position: absolute;
  top: 252px;
  left: 288px;
  display: flex;
  align-items: center;
  gap: 14px;
  width: 567px;
  height: 44px;
  padding: 0 8px 0 6px;
  border: 1px solid #a9a9a9;
  background: #fafafa;
}

.float-bar svg {
  width: 28px;
  height: 28px;
}

.float-bar .blue {
  fill: #e6edf8;
  stroke: #5b8bd8;
}

.push {
  height: 36px;
  margin-left: auto;
  border-left: 1px solid #ddd;
}

.push + button {
  margin-left: -3px;
}

.scrollbar {
  display: flex;
  flex-direction: column;
  align-items: center;
  justify-content: space-between;
  width: 22px;
  padding-top: 17px;
  background: #dedede;
}

.scrollbar .caret {
  border-top-color: #b0b0b0;
  border-bottom-color: #b0b0b0;
}

.scrollbar .caret:not(.up) {
  border-bottom-color: transparent;
}

.scrollbar .caret.up {
  border-top-color: transparent;
}

.pager {
  display: flex;
  flex-direction: column;
  align-items: center;
  gap: 18px;
  margin-top: auto;
  padding-bottom: 12px;
}

.pager span {
  display: flex;
  flex-direction: column;
  gap: 1px;
}

.scroll-foot {
  width: 100%;
  height: 21px;
  background: #d8d8d8;
}

.notes {
  display: flex;
  align-items: center;
  gap: 8px;
  height: 41px;
  padding: 2px 0 0 8px;
  border-top: 1px solid #d2d2d2;
  font-size: 20px;
  color: #666;
}

.side-tools {
  position: relative;
  display: flex;
  flex-direction: column;
  align-items: center;
  gap: 28px;
  width: 66px;
  padding: 15px 2px 0 0;
  border-left: 1px solid #d6d6d6;
}

.side-tools button svg {
  width: 26px;
  height: 26px;
}

.grip {
  margin-bottom: 2px;
}

.side-more {
  width: 58px;
  margin-top: auto;
  padding: 27px 16px 16px;
  border-top: 1px solid #d2d2d2;
}

.meter {
  position: absolute;
  top: 546px;
  right: 0;
  width: 15px;
  height: 89px;
  border: 1px solid #5a6474;
  border-radius: 5px 0 0 5px;
  background:
    repeating-linear-gradient(transparent 0 2px, #454f60 2px 4px) 5px 9px / 7px 71px no-repeat,
    linear-gradient(#454f60, #3c4656 35%, #8faa5a 36%, #7bb86a 70%, #4cc0a0) 5px 9px / 7px 71px no-repeat,
    #454f60;
}

/* status bar */
.status {
  position: relative;
  display: flex;
  align-items: center;
  justify-content: space-between;
  height: 48px;
  padding-right: 22px;
  background: #f4f4f4;
  color: #666;
}

.status button {
  color: #555;
}

.status-cell {
  padding: 5px 16px;
  border-right: 1px solid #dedede;
}

.beautify {
  gap: 6px;
  margin: 0 auto 0 880px;
}

.beautify .caret {
  margin-left: 7px;
}

.views {
  display: flex;
  align-items: center;
}

.note-view {
  margin-right: 9px;
}

.view {
  justify-content: center;
  width: 35px;
  height: 36px;
  margin-right: 4px;
  border-radius: 6px;
}

.view.active {
  background: #c4c4c4;
}

.play {
  justify-content: center;
  width: 47px;
  height: 36px;
  margin: 0 8px 0 15px;
  border-radius: 6px;
  background: #fb7a58;
}

.zoom-val {
  gap: 6px;
  margin: 0 18px 0 20px;
}

.zoom {
  appearance: none;
  width: 207px;
  height: 20px;
  margin: 0 18px;
  background:
    linear-gradient(#aaa, #aaa) 102px center / 1px 7px no-repeat,
    linear-gradient(to right, #666 90px, #b5b5b5 90px) center / 100% 1px no-repeat;
}

.zoom::-webkit-slider-thumb {
  appearance: none;
  width: 19px;
  height: 19px;
  border: 2px solid #444;
  border-radius: 50%;
  background: #eee;
}

.fit {
  margin-left: 20px;
}

/* watermark */
.watermark {
  position: absolute;
  right: 100px;
  bottom: 34px;
  z-index: 2;
  filter: drop-shadow(0 0 1px #aaa);
  opacity: 0.8;
  pointer-events: none;
}

.watermark text, .wm-paw {
  fill: #fff;
  stroke: #ccc;
  stroke-width: 1;
}

.wm-bai {
  font: 700 86px "Liberation Sans", sans-serif;
}

.watermark .wm-du {
  font: 700 52px "Liberation Sans", sans-serif;
  fill: #e9e9e9;
  stroke: #bbb;
}

.wm-cn {
  font: 900 66px "Noto Sans CJK SC", sans-serif;
}

.wm-url {
  font: 400 44px "Noto Sans", sans-serif;
}
```

FILE: script.js
```js
const palettes = {
  theme: ['#ffffff', '#000000', '#808080', '#000000', '#bbe0e3', '#333399', '#ffffff', '#000000', '#daebef', '#2d2c88'],
  tints: [
    '#f2f2f2', '#808080', '#e6e6e6', '#808080', '#9fd3d8', '#d0d0f0', '#f2f2f2', '#808080', '#badcde', '#cfceee',
    '#d9d9d9', '#595959', '#cccccc', '#595959', '#73bfc6', '#a2a2e0', '#d9d9d9', '#595959', '#8cc7ca', '#9f9ddf',
    '#bfbfbf', '#404040', '#b3b3b3', '#404040', '#3b8c93', '#7474d0', '#bfbfbf', '#404040', '#46999d', '#6d6bcf',
    '#a6a6a6', '#262626', '#606060', '#262626', '#1e464a', '#262673', '#a6a6a6', '#262626', '#234c4f', '#222166',
    '#808080', '#0d0d0d', '#404040', '#0d0d0d', '#0c1c1d', '#1a1a4d', '#808080', '#0d0d0d', '#0e1f20', '#171644'
  ],
  standard: ['#c00000', '#ff0000', '#ffc000', '#ffff00', '#92d050', '#00b050', '#00b0f0', '#0070c0', '#002060', '#7030a0'],
  recent: ['#f0e03c', '#4ea8be', '#52d18d', '#22dbcf', '#fcfa9f', '#e2adff', '#fc8793', '#fd8e79', '#ff6f50', '#99f1fd']
};

for (const id in palettes) {
  const box = document.getElementById(id);
  palettes[id].forEach((color, i) => {
    const swatch = document.createElement('button');
    swatch.style.background = color;
    swatch.setAttribute('aria-label', color);
    if (id === 'tints' && i === 20) swatch.className = 'picked';
    box.appendChild(swatch);
  });
}

// preset line styles
['#000', '#bbdfe2', '#333399', '#fff', '#000', '#daecee'].forEach(color => {
  const line = document.createElement('button');
  line.style.background = color;
  line.setAttribute('aria-label', '线条样式');
  document.getElementById('style-list').appendChild(line);
});

// label and drawn thickness of each weight
const weights = [['0.25', 1], ['0.5', 1], ['0.75', 1], ['1', 2], ['1.5', 2], ['2.25', 3], ['3', 4], ['4.5', 6], ['6', 8]];

weights.forEach(([pt, px]) => {
  const li = document.createElement('li');
  if (pt === '1.5') li.className = 'current';
  li.innerHTML = `<button>${pt} 磅<span class="weight"><i style="height:${px}px"></i></span></button>`;
  document.getElementById('weights').appendChild(li);
});
```
